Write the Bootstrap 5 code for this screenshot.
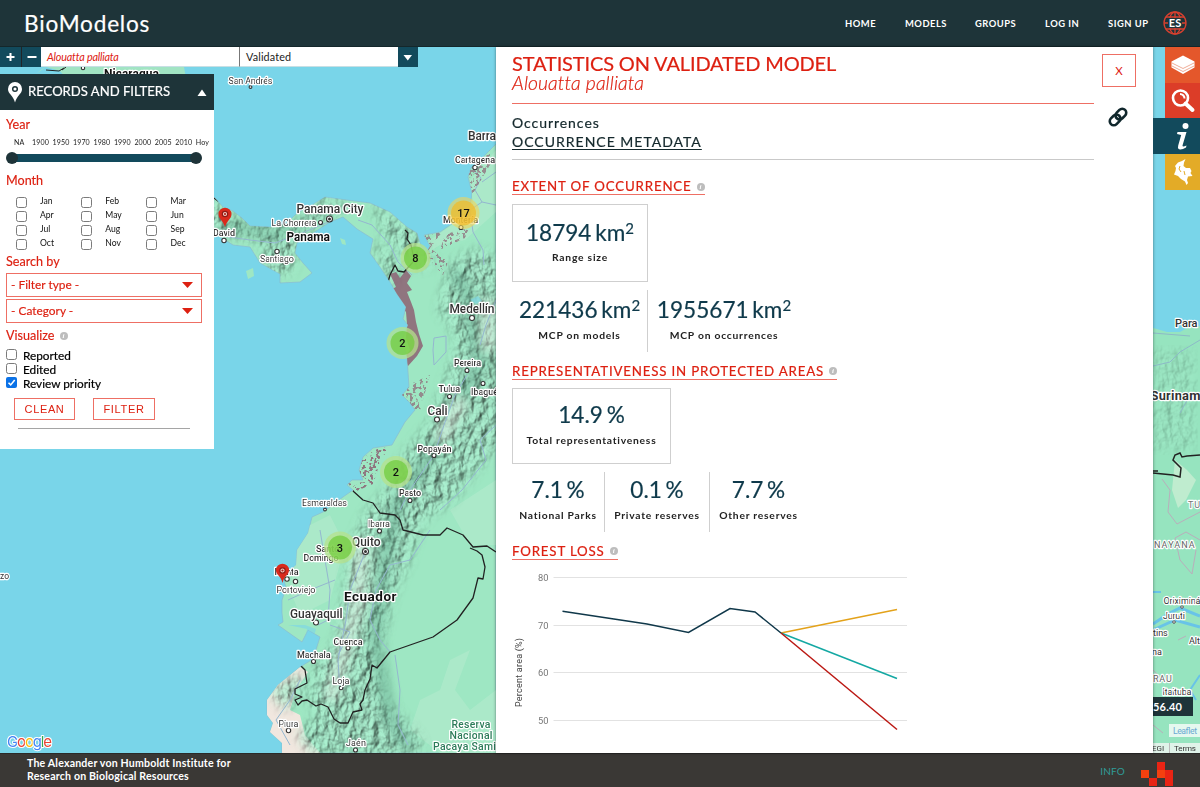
<!DOCTYPE html>
<html lang="en">
<head>
<meta charset="utf-8">
<meta name="viewport" content="width=device-width, initial-scale=1">
<title>BioModelos</title>
<link href="https://cdn.jsdelivr.net/npm/bootstrap@5.3.0/dist/css/bootstrap.min.css" rel="stylesheet">
<style>
:root{--dark:#1e3439;--teal:#124a5c;--red:#dd2011;--line:#ee6f64}
body{font-family:Lato,sans-serif;height:787px;overflow:hidden;color:#111;line-height:1}
.topbar{height:47px;background:var(--dark);color:#fff;border-bottom:1px solid #14272b}
.brandname{font-size:22.6px;letter-spacing:.8px;margin-left:24px;line-height:45px;-webkit-text-stroke:.2px #fff}
.topbar .nav-link{color:#fff;font-weight:700;font-size:9.4px;letter-spacing:.5px;padding:0;line-height:45px}
.stage{height:706px}
.mapsvg{position:absolute;inset:0;z-index:0}
.mapsvg text{font-family:Roboto,sans-serif;paint-order:stroke;stroke:#fff;stroke-width:2.4px;stroke-linejoin:round;fill:#333}
.mapsvg .clu text{font-family:Roboto,sans-serif;font-size:11px;stroke:none;fill:#111;font-weight:500}
.leftcol{width:496px;z-index:1}
.tool{height:20px;font-size:10.8px}
.tool .sq{background:var(--teal);color:#fff}
.tool .fld{background:#fff;border-bottom:1px solid #c8dfe4;line-height:20px;padding-left:6px}
.filters{width:214px;height:375px;margin-top:7px;background:#fff}
.fhead{height:36px;background:var(--dark);color:#fff;font-size:13.1px;-webkit-text-stroke:.2px #fff}
.fhead svg{flex:none}
.lab{color:var(--red);font-size:12.6px;line-height:16px;-webkit-text-stroke:.15px var(--red)}
.ticks{font-size:7.1px;line-height:8px;letter-spacing:.1px;color:#222;margin:0 5px 0 14px}
.ticks span:first-child{margin-right:4px}
.slider{height:8px;background:var(--teal);margin:7.5px 18px 0 12px;position:relative}
.slider i{position:absolute;top:-2px;width:12px;height:12px;border-radius:50%;background:var(--dark)}
.cb{appearance:none;width:11px;height:11px;border:1px solid #7b7b7b;border-radius:2.5px;background:#fff;margin:0;flex:none;display:block}
.months{display:grid;grid-template-columns:65.3px 65.3px auto;grid-auto-rows:14.3px;padding-left:15.5px;font-size:8.6px}
.months label{display:flex;gap:13.5px}
.months span{line-height:9px}
.sel{height:24.5px;border:1px solid var(--line);color:var(--red);font-size:11.9px;margin:0 12px 1.6px 6px;padding:0 8px 0 4px;-webkit-text-stroke:.15px var(--red)}
.vis{font-size:11.8px;color:#000;-webkit-text-stroke:.2px #000}
.vis label{height:14.3px;display:flex;gap:6px;line-height:14px}
.btnred{border:1px solid var(--line);color:var(--red);border-radius:0;background:#fff;font:11px/20px "Liberation Sans",sans-serif;letter-spacing:.65px;padding:0;height:22px}
.stats{width:657px;background:#fff;z-index:2;box-shadow:0 0 3px rgba(0,0,0,.45);padding-left:16px}
.main{width:582px}
.main h1{font-size:20px;line-height:20px;font-weight:400;color:var(--red);margin:6px 0 0;letter-spacing:-.14px;-webkit-text-stroke:.2px var(--red)}
.main h2{font-size:19.4px;line-height:20px;font-weight:300;font-style:italic;color:var(--red);margin:0;letter-spacing:.08px;-webkit-text-stroke:.2px var(--red)}
.occ{border-top:1px solid var(--line);border-bottom:1px solid #c9c9c9;height:57px;margin-top:10px;padding-top:9px;font-size:14px;line-height:19px;letter-spacing:.95px;color:#14282c;-webkit-text-stroke:.2px #14282c}
.occ u{letter-spacing:1px;font-size:14px;text-underline-offset:2px}
.sec{display:inline-flex;align-items:center;gap:5px;color:var(--red);font-size:13.3px;letter-spacing:.82px;line-height:15px;border-bottom:1px solid var(--line);height:16.5px;white-space:nowrap;-webkit-text-stroke:.2px var(--red)}
.info{width:8px;height:8px;border-radius:50%;background:#bdbdbd;color:#fff;font:italic bold 7px/8px "Liberation Serif",serif;text-align:center;letter-spacing:0;flex:none;-webkit-text-stroke:0}
.box{border:1px solid #cfcfcf;text-align:center}
.num{font-size:22.6px;line-height:24px;color:#0f3a4b;white-space:nowrap;word-spacing:-2px;-webkit-text-stroke:.2px #0f3a4b}
.num sup{font-size:15px;top:-.5em;line-height:0}
.cap{font-size:10.3px;font-weight:700;letter-spacing:.77px;line-height:14px;color:#222;white-space:nowrap}
.cell{text-align:center;flex:none}
.cell+.cell{border-left:1px solid #cfcfcf}
.closex{width:34px;height:33px;border:1px solid var(--line);border-radius:0;color:var(--red);background:#fff;font:400 11.5px/31px Lato,sans-serif;padding:0;margin:7px 0 0 8px}
.rail{width:47px;z-index:3}
.rail .it{width:35px;height:35.5px;margin-left:auto}
.foot{height:34px;background:#3a3835;border-top:1px solid #2b2a28;color:#fff;font-size:10.6px;font-weight:700;letter-spacing:.18px;line-height:13.4px}
</style>
</head>
<body>
<nav class="topbar d-flex align-items-center">
  <div class="brandname me-auto">BioModelos</div>
  <a class="nav-link" style="width:60px" href="#">HOME</a>
  <a class="nav-link" style="width:70px" href="#">MODELS</a>
  <a class="nav-link" style="width:70px" href="#">GROUPS</a>
  <a class="nav-link" style="width:63px" href="#">LOG IN</a>
  <a class="nav-link" style="width:54px" href="#">SIGN UP</a>
  <svg width="26" height="26" viewBox="0 0 26 26" style="margin-right:12px"><g fill="none" stroke="#d8402f" stroke-width="1.3"><circle cx="13" cy="13" r="11"/><ellipse cx="13" cy="13" rx="6" ry="11"/><path d="M13 2v22M2 13h22M4 7h18M4 19h18"/></g><rect x="6" y="8" width="14" height="10" fill="#1e3439"/><text x="13" y="17.200" font-family="Lato" font-weight="700" font-size="11" fill="#fff" text-anchor="middle">ES</text></svg>
</nav>
<main class="stage position-relative d-flex">
<svg class="mapsvg" width="1200" height="706" viewBox="0 47 1200 706">
  <defs>
    <filter id="relief" x="-5%" y="-5%" width="110%" height="110%" color-interpolation-filters="sRGB">
      <feTurbulence type="fractalNoise" baseFrequency=".13 .09" numOctaves="4" seed="8" result="n"/>
      <feDiffuseLighting in="n" surfaceScale="3.6" diffuseConstant="1.05" lighting-color="#a6e8ca" result="l"><feDistantLight azimuth="215" elevation="58"/></feDiffuseLighting>
      <feGaussianBlur in="SourceAlpha" stdDeviation="6" result="a"/>
      <feComposite in="l" in2="a" operator="in"/>
    </filter>
    <filter id="soft"><feGaussianBlur stdDeviation="5"/></filter>
    <filter id="speck" x="-5%" y="-5%" width="110%" height="110%">
      <feTurbulence type="fractalNoise" baseFrequency=".3" numOctaves="2" seed="4"/>
      <feColorMatrix values="0 0 0 0 0 0 0 0 0 0 0 0 0 0 0 0 0 0 -14 6.6" result="m"/>
      <feComposite in="SourceGraphic" in2="m" operator="in"/>
    </filter>
    <path id="land" d="M214 197L223 207L233 211L242 218L250 226L270 227L287 223L297 213L312 205L325 197L347 200L370 203L390 212L407 227L417 233L421 246L426 254L430 246L424 235L440 232L453 223L464 215L470 207L472 193L468 177L471 168L477 163L487 153L496 144V753H282L282 743L270 732L273 723L267 715L267 700L278 685L300 667L313 659L320 637L308 630L302 642L292 635L278 625L283 622L282 613L282 600L286 588L282 572L290 570L296 565L297 550L308 533L312 517L323 512L343 497L353 490L347 485L352 480L363 480L359 470L363 457L373 448L392 445L397 436L405 422L415 410L410 403L402 395L409 387L407 357L402 340L408 325L403 319L406 307L397 294L390 282L380 267L370 253L373 239L357 229L343 217L330 222L313 233L297 243L295 253L303 263L312 273L300 282L280 283L280 274L260 263L250 247L233 245L214 233Z"/>
    <clipPath id="lc"><use href="#land"/></clipPath>
  </defs>
  <rect y="46" width="1200" height="707" fill="#79d5e9"/>
  <path d="M36 74L42 69L46 67L60 71L66 78H186L184 67H46Z" fill="#a1e4c3"/><path d="M46 70L59 71L64 68M62 70L66 67" stroke="#222" fill="none"/>
  <use href="#land" fill="#9ee7c3" stroke="#8bbcd0" stroke-width=".7"/>
  <path d="M340 238l5 2 1 5-4-1zM246 271l7-3 1 8-6 3z" fill="#9ee7c3"/>
  <g clip-path="url(#lc)">
    <g fill="#aeeaca" opacity=".8"><path d="M412 262L440 245L465 240L496 212V150L470 180L474 210L430 240ZM300 530L330 515L345 545L330 600L300 615L290 590ZM450 510L496 480V545H470ZM420 700L440 690L450 660L470 650L455 690L470 710L496 690V753H440L410 730Z"/></g>
    <path d="M300 667L285 678L265 695V753H320L305 735L300 715L290 710L296 690L308 672Z" fill="#f1e7df"/>
    <g opacity=".8">
      <path filter="url(#relief)" d="M205 195L240 222L290 228L320 200L350 203L300 235L290 272L270 275L262 240L205 232ZM370 203L417 235L432 262L420 268L390 240ZM372 240L398 262L400 290L385 272ZM452 262L478 250L500 262V440L480 465L450 500L420 522L408 560L390 600L378 655L385 700L420 740V753H350L322 725L310 700L318 660L338 640L346 590L352 545L366 515L388 490L405 455L430 425L445 385L460 340L440 310ZM268 690L300 672L305 690L285 710ZM298 735L330 705L350 753H310Z"/>
    </g>
    <g filter="url(#soft)" opacity=".4"><path d="M455 270L470 300L480 360L458 410L430 455L397 505L385 560L375 640L390 720L410 750" stroke="#5b9f84" stroke-width="15" fill="none"/><path d="M362 540L358 600L345 650L330 700M462 400L440 440M488 300L490 350" stroke="#efe9e4" stroke-width="15" fill="none"/><path d="M225 225L275 236L310 222" stroke="#559a7f" stroke-width="10" fill="none"/></g>
    <g fill="none" stroke="#94b6cf" stroke-width="1"><path d="M472 168L481 178L475 190L482 202L470 210L473 232L483 250L484 265M496 172L482 182M496 205L482 202M222 236L250 240L275 243L300 234L328 222M358 220L372 225L390 245L398 262L412 275M496 300L486 325L480 345M434 338L446 336V352L434 365L433 350ZM467 375L455 395L444 425L434 455L410 490L400 510M496 425L480 440L486 460L462 490L440 510M320 530L325 560L330 590L328 620L318 625M366 550L350 590L346 620L338 660L340 690M288 600L310 590L335 580M390 652L380 640L370 620L376 590L390 565L410 560L430 530M300 680L290 700L276 720L290 745M330 625L350 632L338 655M395 655L400 690L398 725L408 745"/></g>
    <g fill="#8e6878"><path d="M390 274L396 272L400 278L406 270L411 276L407 283L412 290L407 292L411 302L414 310L416 322L419 334L423 346L417 356L408 366L405 357L410 350L406 338L407 324L406 312L400 304L396 296L390 290L396 287Z" opacity=".9"/><g filter="url(#speck)" opacity=".9"><path d="M376 447L362 460L359 474L370 482L348 483L354 492L373 484L377 472L382 452ZM380 450l8-4-4 10z"/><g opacity=".8"><path d="M422 236L442 232L430 248L448 262L443 275L430 260ZM402 388L430 375L420 410L408 408L400 398ZM468 170L490 150V165L472 195ZM445 235L470 225L465 238L440 250Z"/></g></g></g>
    <path d="M288 625L305 625L316 629L310 650L305 642L307 629ZM470 300l8-4 4 5-6 3z" fill="#79d5e9" opacity=".6"/>
    <g fill="none" stroke="#222" stroke-width="1.300" stroke-linejoin="round"><path d="M214 198l4 3 4-3M405 230l3 3-1 6 4 6 3 14M413 262l-9 10-6-1-3-6-5 10-2 7M353 491L363 500L373 503L380 513L395 515L400 520L403 530L423 535L440 535L447 528L463 535L473 547L487 546L496 552M470 548L477 551L482 555L485 567L483 579L478 578L473 598L457 620L433 637L390 652L377 668L372 665L370 679L365 690L363 700L360 704L362 710L353 712L348 723L340 723L334 719L328 707L321 704L316 706L307 700L302 701L298 705L295 700L302 697L295 694V689L307 683L305 670L300 665"/></g>
  </g>
  <!-- strip east of the statistics sheet -->
  <path d="M1150 327L1167 332H1180L1187 328L1200 326V753H1150Z" fill="#96e4bf"/>
  <g opacity=".25"><path filter="url(#relief)" d="M1153 350H1195V450H1153Z"/></g>
  <path d="M1175 460L1187 470L1196 480L1186 500L1178 508L1172 490Z" fill="#bfeccf"/>
  <g fill="none" stroke="#8db9c8"><path d="M1153 366L1170 362L1180 352L1200 340M1190 395l-10 18M1153 333L1190 336M1170 500"/><path stroke="#b9aebb" d="M1162 479L1170 490L1168 512L1177 524L1200 512M1175 538L1186 532L1200 540M1175 538L1180 560L1192 574L1196 550M1178 640l8-4M1153 670l8 8M1153 725l10 8"/></g>
  <path d="M1153 624L1168 614L1180 608L1200 616M1153 630L1175 620L1200 627" stroke="#68c3e8" stroke-width="3" fill="none"/>
  <path d="M1200 675L1190 690L1196 700M1153 592h8" stroke="#68c3e8" fill="none" stroke-width="2"/>
  <path d="M1153 473L1173 475L1180 477L1181 468L1173 460L1175 455L1180 453L1182 457L1187 456L1200 455M1153 471h5" stroke="#222" stroke-width="1.500" fill="none"/>
  <g fill="#fff" stroke="#555"><circle cx="1182" cy="607" r="1.300"/><circle cx="1174" cy="622" r="1.300"/></g>
  <g font-size="9"><text x="1175" y="327" font-size="11" font-weight="500">Para</text><text x="1150.500" y="400" font-size="13" font-weight="700" textLength="50">Surinam</text><text x="1188" y="508" letter-spacing="1" style="fill:#777">TU</text><text x="1154" y="547.500" letter-spacing="1.100" style="fill:#666">NAYANA</text><text x="1163.500" y="604" textLength="37">Oriximiná</text><text x="1163" y="619" textLength="22">Juruti</text><text x="1153" y="636">tins</text><text x="1189" y="644">Alt</text><text x="1152" y="655">na</text><text x="1153" y="682" letter-spacing=".800" style="fill:#666">RAU</text><text x="1162.500" y="694.500" textLength="29">Itaituba</text></g>
  <rect x="1140" y="697" width="53" height="19" fill="#1e3439"/><text x="1153" y="710.500" style="stroke:none;fill:#fff;font-family:Lato;font-weight:700;font-size:11px" textLength="29">56.40</text>
  <rect x="1169" y="724" width="31" height="13" fill="#fff" opacity=".75"/><text x="1173" y="734" style="stroke:none;fill:#6aa9d2;font-size:8.6px" textLength="24">Leaflet</text>
  <rect x="1150" y="743" width="50" height="10" fill="#f2f6f4" opacity=".8"/><text x="1152" y="751" style="stroke:none;font-size:8px">EGI</text><path d="M1169.500 743v10" stroke="#bbb"/><text x="1174" y="751" style="stroke:none;font-size:8px" textLength="22">Terms</text>
  <!-- towns -->
  <g fill="#fff" stroke="#333" stroke-width="1.100"><circle cx="250.500" cy="87" r="1.400"/><circle cx="83" cy="68" r="1.700"/><circle cx="320.500" cy="222.500" r="2"/><circle cx="224" cy="240.500" r="2.200"/><circle cx="277" cy="251.500" r="2.200"/><circle cx="475" cy="167.500" r="2.200"/><circle cx="461" cy="227.500" r="2"/><circle cx="472" cy="318" r="2.500"/><circle cx="467" cy="370.500" r="2"/><circle cx="483" cy="383.500" r="2"/><circle cx="449.500" cy="396.500" r="2"/><circle cx="437" cy="419.500" r="2.500"/><circle cx="434" cy="455.500" r="2"/><circle cx="410" cy="500.500" r="2"/><circle cx="325" cy="509.500" r="1.400"/><circle cx="379.500" cy="531" r="2"/><circle cx="287" cy="579" r="2.200"/><circle cx="295.500" cy="581.500" r="2.200"/><circle cx="316" cy="622.500" r="2.500"/><circle cx="348" cy="648" r="2"/><circle cx="313.500" cy="661.500" r="2"/><circle cx="341" cy="688" r="1.800"/><circle cx="288.500" cy="730.500" r="2.200"/><circle cx="355.500" cy="750" r="2"/><circle cx="329.500" cy="219" r="3"/><circle cx="365.500" cy="551.500" r="3"/></g>
  <circle cx="329.500" cy="219" r="1.500" fill="#333"/><circle cx="365.500" cy="551.500" r="1.500" fill="#333"/>
  <g font-size="9">
    <text x="104" y="78" font-size="12" style="fill:#111;font-weight:700" textLength="55">Nicaragua</text>
    <text x="228.500" y="83.500" textLength="44">San Andrés</text>
    <text x="468" y="139.500" font-size="12" font-weight="500" textLength="28">Barra</text>
    <text x="455" y="163" textLength="40" font-weight="500">Cartagena</text>
    <text x="296.500" y="213" font-size="12" font-weight="500" textLength="67">Panama City</text>
    <text x="271.500" y="225.500" textLength="45">La Chorrera</text>
    <text x="286.500" y="240.500" font-size="12" style="fill:#111;font-weight:700" textLength="43.500">Panama</text>
    <text x="213" y="236" textLength="22" font-weight="500">David</text>
    <text x="260" y="262" textLength="34">Santiago</text>
    <text x="443" y="223" textLength="35" font-weight="500">Montería</text>
    <text x="449.500" y="313" font-size="12" font-weight="500" textLength="45">Medellín</text>
    <text x="454" y="366" textLength="27" font-weight="500">Pereira</text>
    <text x="438.500" y="392" textLength="21.500" font-weight="500">Tulua</text>
    <text x="471" y="394.500" textLength="27" font-weight="500">Ibagué</text>
    <text x="427.500" y="414.500" font-size="12" font-weight="500" textLength="20">Cali</text>
    <text x="417.500" y="451.500" textLength="34" font-weight="500">Popayán</text>
    <text x="399" y="496" textLength="22" font-weight="500">Pasto</text>
    <text x="302" y="506" textLength="45">Esmeraldas</text>
    <text x="368" y="527" textLength="22">Ibarra</text>
    <text x="352" y="546" font-size="12" font-weight="500" textLength="28.500">Quito</text>
    <text x="316" y="552" font-weight="500">Santo</text><text x="303.500" y="560.500" textLength="35" font-weight="500">Domingo</text>
    <text x="274.500" y="574.500" textLength="24" font-weight="500">Manta</text>
    <text x="276.500" y="593" textLength="39">Portoviejo</text>
    <text x="344" y="601" font-size="13.500" style="fill:#111;font-weight:700" textLength="52.500">Ecuador</text>
    <text x="290" y="617.500" font-size="12" font-weight="500" textLength="52.500">Guayaquil</text>
    <text x="333.500" y="644.500" textLength="29" font-weight="500">Cuenca</text>
    <text x="297" y="657.500" textLength="33.500" font-weight="500">Machala</text>
    <text x="332.500" y="684" textLength="17">Loja</text>
    <text x="278.500" y="726.500" textLength="20">Piura</text>
    <text x="346" y="746" textLength="20">Jaén</text>
    <g font-size="10.500" style="font-weight:500"><text x="451.500" y="728" style="fill:#2c7b59" textLength="39">Reserva</text><text x="449.500" y="739" style="fill:#2c7b59" textLength="43">Nacional</text><text x="433" y="750" style="fill:#2c7b59" textLength="63">Pacaya Sami</text></g>
    <text x="0" y="579" font-size="8.500">zo</text>
  </g>
  <!-- clusters and pins -->
  <g class="clu" text-anchor="middle">
    <g fill="#f1d357" fill-opacity=".6"><circle cx="463.500" cy="213" r="16"/><circle cx="463.500" cy="213" r="12.500" fill="#f0bb2a" fill-opacity=".75"/></g><text x="463.500" y="217">17</text>
    <g fill="#b5e28c" fill-opacity=".75"><circle cx="415.500" cy="258" r="15"/><circle cx="402.500" cy="343" r="16"/><circle cx="396" cy="472" r="16"/><circle cx="340" cy="547.500" r="16"/></g>
    <g fill="#6ecc39" fill-opacity=".7"><circle cx="415.500" cy="258" r="11.500"/><circle cx="402.500" cy="343" r="12"/><circle cx="396" cy="472" r="12"/><circle cx="340" cy="547.500" r="12"/></g>
    <text x="415.500" y="262">8</text><text x="402.500" y="347">2</text><text x="396" y="476">2</text><text x="340" y="551.500">3</text>
  </g>
  <g fill="#d9291c"><path d="M225 227C223 220 218.500 219 218.500 214A6.500 6.200 0 0 1 231.500 214C231.500 219 227 220 225 227ZM282.500 583C280.500 575 276 575 276 570A6.500 6.200 0 0 1 289 570C289 575 284.500 575 282.500 583Z"/></g>
  <g fill="none" stroke="#8f1a14" stroke-width="1.200"><circle cx="225" cy="214" r="2.700" fill="#f5cfc8"/><circle cx="282.500" cy="570.500" r="2.700" fill="#f5cfc8"/></g><circle cx="225" cy="214" r="1.100" fill="#b02018"/><circle cx="282.500" cy="570.500" r="1.100" fill="#b02018"/>
  <text x="7" y="747" style="font-family:Inter,sans-serif;font-size:15px;stroke-width:2px" textLength="45"><tspan style="fill:#4285f4">G</tspan><tspan style="fill:#ea4335">o</tspan><tspan style="fill:#fbbc05">o</tspan><tspan style="fill:#4285f4">g</tspan><tspan style="fill:#34a853">l</tspan><tspan style="fill:#ea4335">e</tspan></text>
</svg>

<section class="leftcol">
  <div class="tool d-flex">
    <div class="sq" style="width:20.500px"><svg width="20" height="20" class="d-block"><path d="M10.500 6v8M6.500 10h8" stroke="#fff" stroke-width="2"/></svg></div>
    <div class="sq border-start border-dark" style="width:20.500px"><svg width="19" height="20" class="d-block"><path d="M5.500 10h9" stroke="#fff" stroke-width="2"/></svg></div>
    <div class="fld fst-italic" style="width:198px;color:var(--red);letter-spacing:-.2px">Alouatta palliata</div>
    <div class="fld" style="width:159px;border-left:1px solid #777;color:#222;letter-spacing:.15px">Validated</div>
    <div class="sq" style="width:20px"><svg width="20" height="20" class="d-block"><path d="M5.500 8h8.500l-4.200 5.500z" fill="#fff"/></svg></div>
  </div>
  <div class="filters">
    <div class="fhead d-flex align-items-center">
      <svg width="28" height="36"><path d="M15 28.500C13 21 8 20 8 15A7 7 0 0 1 22 15C22 20 17 21 15 28.500Z" fill="#fff"/><circle cx="15" cy="15" r="2.300" fill="#fff" stroke="#1e3439" stroke-width="1.500"/></svg>
      <span>RECORDS AND FILTERS</span>
      <svg width="12" height="36" class="ms-auto" style="margin-right:6px"><path d="M1.500 22h9l-4.500-6.500z" fill="#fff"/></svg>
    </div>
    <div class="lab" style="padding:7px 0 5.500px 6px">Year</div>
    <div class="ticks d-flex justify-content-between"><span>NA</span><span>1900</span><span>1950</span><span>1970</span><span>1980</span><span>1990</span><span>2000</span><span>2005</span><span>2010</span><span>Hoy</span></div>
    <div class="slider"><i style="left:-6px"></i><i style="right:-6px"></i></div>
    <div class="lab" style="padding:11px 0 7.500px 6px">Month</div>
    <div class="months">
      <label><input type="checkbox" class="cb"><span>Jan</span></label><label><input type="checkbox" class="cb"><span>Feb</span></label><label><input type="checkbox" class="cb"><span>Mar</span></label>
      <label><input type="checkbox" class="cb"><span>Apr</span></label><label><input type="checkbox" class="cb"><span>May</span></label><label><input type="checkbox" class="cb"><span>Jun</span></label>
      <label><input type="checkbox" class="cb"><span>Jul</span></label><label><input type="checkbox" class="cb"><span>Aug</span></label><label><input type="checkbox" class="cb"><span>Sep</span></label>
      <label><input type="checkbox" class="cb"><span>Oct</span></label><label><input type="checkbox" class="cb"><span>Nov</span></label><label><input type="checkbox" class="cb"><span>Dec</span></label>
    </div>
    <div class="lab" style="padding:0 0 3px 6px">Search by</div>
    <div class="sel d-flex align-items-center justify-content-between"><span>- Filter type -</span><svg width="11" height="6"><path d="M0 0h11l-5.500 6z" fill="#dd2011"/></svg></div>
    <div class="sel d-flex align-items-center justify-content-between"><span>- Category -</span><svg width="11" height="6"><path d="M0 0h11l-5.500 6z" fill="#dd2011"/></svg></div>
    <div class="lab d-flex align-items-center" style="gap:5px;padding:3px 0 5px 6px">Visualize <span class="info">i</span></div>
    <div class="vis" style="padding-left:6px">
      <label><input type="checkbox" class="cb"><span>Reported</span></label>
      <label><input type="checkbox" class="cb"><span>Edited</span></label>
      <label><svg width="11" height="11"><rect width="11" height="11" rx="2" fill="#0b72e7"/><path d="M2.500 5.700l2.200 2.200 4-5" stroke="#fff" stroke-width="1.600" fill="none"/></svg><span>Review priority</span></label>
    </div>
    <div class="d-flex" style="margin:6px 0 0 14px;gap:18px"><button class="btnred" style="width:61px">CLEAN</button><button class="btnred" style="width:62px">FILTER</button></div>
    <div style="margin:8.500px 24px 0 18px;border-top:1px solid #a5a5a5"></div>
  </div>
</section>

<section class="stats d-flex">
  <div class="main">
    <h1>STATISTICS ON VALIDATED MODEL</h1>
    <h2>Alouatta palliata</h2>
    <div class="occ"><div>Occurrences</div><u>OCCURRENCE METADATA</u></div>
    <div style="height:44px;padding-top:17px"><span class="sec">EXTENT OF OCCURRENCE <span class="info">i</span></span></div>
    <div class="box" style="width:136px;height:78px;padding-top:16px"><div class="num">18794 km<sup>2</sup></div><div class="cap" style="margin-top:5px">Range size</div></div>
    <div class="d-flex" style="margin-top:8px;height:62px">
      <div class="cell" style="width:135px;padding-top:8px"><div class="num">221436 km<sup>2</sup></div><div class="cap" style="margin-top:6px">MCP on models</div></div>
      <div class="cell" style="width:153px;padding-top:8px"><div class="num">1955671 km<sup>2</sup></div><div class="cap" style="margin-top:6px">MCP on occurrences</div></div>
    </div>
    <div style="height:36px;padding-top:9.500px"><span class="sec">REPRESENTATIVENESS IN PROTECTED AREAS <span class="info">i</span></span></div>
    <div class="box" style="width:159px;height:76px;padding-top:14px"><div class="num">14.9 %</div><div class="cap" style="margin-top:6px">Total representativeness</div></div>
    <div class="d-flex" style="margin-top:8px;height:60px">
      <div class="cell" style="width:92px;padding-top:6px"><div class="num">7.1 %</div><div class="cap" style="margin-top:6px">National Parks</div></div>
      <div class="cell" style="width:105px;padding-top:6px"><div class="num">0.1 %</div><div class="cap" style="margin-top:6px">Private reserves</div></div>
      <div class="cell" style="width:98px;padding-top:6px"><div class="num">7.7 %</div><div class="cap" style="margin-top:6px">Other reserves</div></div>
    </div>
    <div style="height:31px;padding-top:9.500px"><span class="sec">FOREST LOSS <span class="info">i</span></span></div>
    <svg class="d-block" width="410" height="190" viewBox="512 563 410 190" font-family="Roboto" fill="none">
      <path d="M553.500 577.500H907M553.500 625.500H907M553.500 672.500H907M553.500 720.500H907" stroke="#e2e2e2"/>
      <g fill="#777" font-size="9.300" text-anchor="end"><text x="548.500" y="581">80</text><text x="548.500" y="628.500">70</text><text x="548.500" y="676">60</text><text x="548.500" y="723.500">50</text></g>
      <text transform="translate(521.500 707) rotate(-90)" fill="#444" font-size="9" textLength="69">Percent area (%)</text>
      <g stroke-width="1.500"><path stroke="#10384a" d="M562.500 611.300L647 624L688.500 632.500L730 608.500L755 612L781 633"/><path stroke="#e3a21a" d="M781 633L897 609.500"/><path stroke="#14a8a3" d="M781 633L897 678.500"/><path stroke="#bb1712" d="M781 633L897 729.500"/></g>
    </svg>
  </div>
  <div>
    <button class="closex">X</button>
    <svg class="d-block" width="24" height="24" viewBox="-12 -12 24 24" style="margin:18px 0 0 12px"><g transform="rotate(-45)" fill="none" stroke="#10272c" stroke-width="2.600"><rect x="-10" y="-4" width="11.800" height="8" rx="4"/><rect x="-1.800" y="-4" width="11.800" height="8" rx="4"/></g></svg>
  </div>
</section>

<aside class="rail">
  <div class="it" style="background:#e4572b"><svg width="35" height="35" viewBox="0 0 35 35"><path d="M18 8.500L29.500 14.500V20.500L18 27L6.500 20.500V14.500Z" fill="#fff"/><path d="M6 15.500L18 21.500L30 15.500M6 18.500L18 24.500L30 18.500" stroke="#eda48c" stroke-width=".9" fill="none"/></svg></div>
  <div class="it" style="background:#dc3d28"><svg width="35" height="35" viewBox="0 0 35 35" fill="none" stroke="#fff"><circle cx="15.500" cy="15" r="7.500" stroke-width="2.600"/><path d="M15 11a4.500 4.500 0 0 1 4.500 4.500" stroke-width="2"/><path d="M20.500 20.500l7 6.500" stroke-width="4" stroke-linecap="round"/></svg></div>
  <div style="width:47px;height:36px;background:#124a5c"><svg width="47" height="36" viewBox="0 0 47 36" fill="#fff"><circle cx="32.500" cy="8" r="3"/><path d="M24.500 14H33.500L29.500 27.500Q29.300 29.500 33.500 27.500L33 29.500Q29 32 26 31.300Q24.300 30.500 25.200 27.500L28.200 17L24 16Z"/></svg></div>
  <div class="it" style="background:#e3ab27"><svg width="35" height="35" viewBox="0 0 35 35"><path d="M20.500 5L19 8.500L18.500 12L21 14H25L26.500 17L25.500 19L27.500 22L23 22.500L22 26L23 29L21.500 31L20 27.500L16 25L13 22L9 20.500L10.500 17L11 14L10 12L13 8.500L17 7Z" fill="#fff"/><path d="M15 12l-1 3 2 3M19 17l1 4" stroke="#e3ab27" fill="none"/></svg></div>
</aside>
</main>
<footer class="foot d-flex">
  <div class="me-auto" style="padding:3px 0 0 27px">The Alexander von Humboldt Institute for<br>Research on Biological Resources</div>
  <div style="color:#2f9c98;font-weight:400;font-size:10px;margin:11px 16px 0 0">INFO</div>
  <svg width="33" height="26" viewBox="0 0 33 26" style="margin:8px 26px 0 0"><path fill="#e92414" d="M16 0h8v8h-8zM24 8h8v8h-8zM8 16h8v8H8zM24 16h8v8h-8z"/><path fill="#f4400f" d="M0 8h8v8H0zM16 8h8v8h-8z"/></svg>
</footer>
<script src="https://cdn.jsdelivr.net/npm/bootstrap@5.3.0/dist/js/bootstrap.bundle.min.js"></script>
</body>
</html>
